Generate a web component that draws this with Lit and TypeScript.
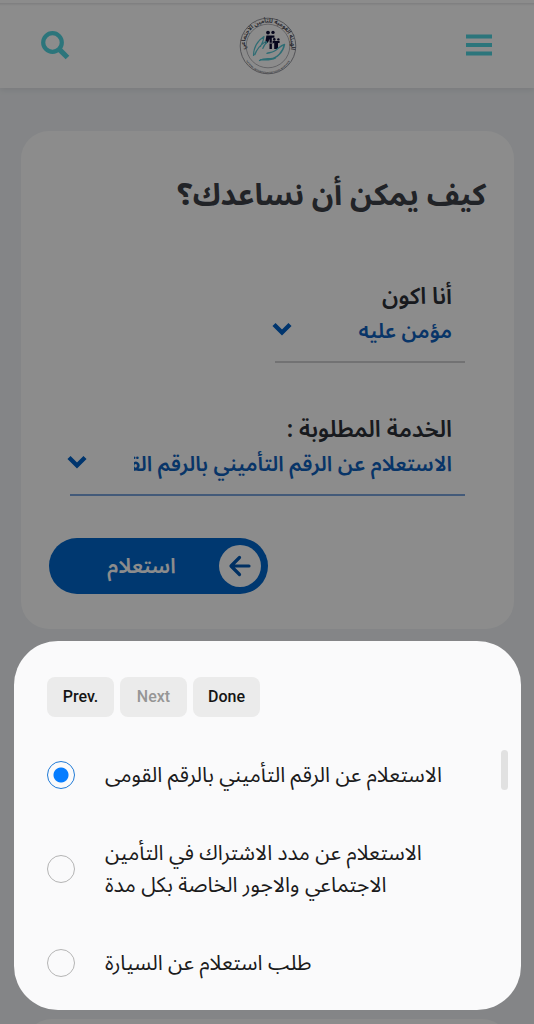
import { LitElement, html, css, svg } from "lit";
import { customElement, state } from "lit/decorators.js";

const SERVICES = [
  "الاستعلام عن الرقم التأميني بالرقم القومى",
  "الاستعلام عن مدد الاشتراك في التأمين الاجتماعي والاجور الخاصة بكل مدة",
  "طلب استعلام عن السيارة",
];

const chevron = svg`<path d="M3 3.5 11 11.5 19 3.5" fill="none" stroke="currentColor" stroke-width="4.4" />`;

@customElement("site-logo")
class SiteLogo extends LitElement {
  static styles = css`
    :host { display: block; }
    svg { display: block; width: 58px; height: 58px; overflow: visible; }
    .top { font: 600 6px "Noto Sans Arabic", "DejaVu Sans", sans-serif; fill: #3a3a48; }
    .low { font: 700 2px "Liberation Sans", sans-serif; fill: #5a5a66; }
  `;
  render() {
    return html`<svg viewBox="0 0 58 58" role="img" aria-label="الهيئة القومية للتأمين الاجتماعي">
      <defs>
        <path id="arc-top" d="M6.200 33A23.200 23.200 0 1 1 51.800 33" />
        <path id="arc-low" d="M3.700 31A25.300 25.300 0 0 0 54.300 31" />
      </defs>
      <circle cx="29" cy="29" r="27.800" fill="none" stroke="#7c7c85" stroke-width=".8" />
      <circle cx="29" cy="29" r="21.800" fill="none" stroke="#96969e" stroke-width=".7" />
      <text class="top" text-anchor="middle" direction="rtl"><textPath href="#arc-top" startOffset="50%">الهيئة القومية للتأمين الاجتماعي</textPath></text>
      <text class="low" text-anchor="middle" direction="ltr"><textPath href="#arc-low" startOffset="50%">NATIONAL ORGANIZATION FOR SOCIAL INSURANCE</textPath></text>
      <g fill="#0b0b33">
        <circle cx="29" cy="15.600" r="1.900" /><circle cx="34" cy="15.400" r="1.700" />
        <path d="M27.400 18.500h8v2.200h-2.600v5h-2.200v-3.600l-1.600 3.400-3 1.400z" />
        <circle cx="35.300" cy="22.400" r="1.300" /><circle cx="39.400" cy="22.400" r="1.200" />
        <path d="M33.600 24h7v2h-1.600v6h-3.800v-6.600l-1.600 1.600zM30.500 26.500h2.400V32h-2.400z" />
      </g>
      <g fill="none" stroke="#57c6d4" stroke-linecap="round" stroke-linejoin="round">
        <path stroke-width="1.200" d="M14.500 38.500c0-7.500 4-14.500 10.500-19-.5 4.500-2 7.500-3.500 10M15.800 37.800c2-6 5-9.500 11-13.300l1 1c-2.300 1.800-3.300 4-4 6" />
        <path stroke-width="1.400" d="M20.500 43.500c4-2.300 7-1.600 11-1.800 6.500-.6 12.500-6.700 14-14.200-4 1-6.500 4.500-10 6.500-2.800 1.500-5 1.600-7.500 2.400M21.500 42.800c5-.2 10 .8 15-2" />
      </g>
    </svg>`;
  }
}

@customElement("app-root")
class AppRoot extends LitElement {
  @state() private selected = 0;

  static styles = css`
    :host {
      display: block;
      position: relative;
      min-height: 100vh;
      font-family: "Noto Sans Arabic", "DejaVu Sans", sans-serif;
      color: #2c3038;
    }
    * { box-sizing: border-box; }
    .page {
      display: flex;
      flex-direction: column;
      height: 100vh;
      overflow: hidden;
      background: #f0f3f6;
    }
    .header {
      display: flex;
      flex: none;
      align-items: center;
      justify-content: space-between;
      height: 88px;
      padding: 3px 42px 0 41px;
      background: linear-gradient(#e6e6e8, #fff) 0 3px / 100% 3px no-repeat #fff;
      box-shadow: 0 2px 6px rgba(0, 0, 0, 0.08);
    }
    .icon-button {
      display: block;
      padding: 0;
      border: 0;
      background: none;
      color: #50d6e1;
    }
    .icon-button svg { display: block; }
    .card {
      flex: none;
      margin: 43px 20px 0 21px;
      padding: 43px 28px 35px;
      border-radius: 28px;
      background: #fff;
    }
    .next-card {
      flex: none;
      height: 120px;
      margin: 390px 24px 0;
      border-radius: 28px;
      background: #fff;
    }
    .title {
      margin: 0 0 62px;
      font-size: 30px;
      line-height: 44px;
      font-weight: 700;
      color: #3c4048;
    }
    .fields {
      display: flex;
      flex-direction: column;
      gap: 50px;
      margin: 0 21px 42px;
    }
    .field label {
      display: block;
      padding-right: 13px;
      font-size: 23px;
      line-height: 34px;
      font-weight: 600;
    }
    .control {
      display: grid;
      align-items: start;
      border-bottom: 2px solid #d0d0d2;
    }
    .control.short { width: 48%; }
    .control.focused { border-color: #7ba4dc; }
    .control select {
      grid-area: 1 / 1;
      width: 100%;
      height: 47px;
      padding: 0 13px 13px 64px;
      border: 0;
      outline: 0;
      appearance: none;
      background: none;
      color: #0f62bd;
      font: 600 21px/34px "Noto Sans Arabic", "DejaVu Sans", sans-serif;
    }
    .control svg {
      grid-area: 1 / 1;
      justify-self: end;
      width: 22px;
      height: 16px;
      margin: 7px 0 0 -4px;
      color: #0062c8;
      pointer-events: none;
    }
    .submit {
      display: flex;
      align-items: center;
      width: 219px;
      height: 56px;
      margin: 0 auto 0 0;
      padding: 7px;
      border: 0;
      border-radius: 28px;
      background: #0066cc;
      color: #fff;
      font: 600 21px/28px "Noto Sans Arabic", "DejaVu Sans", sans-serif;
    }
    .submit svg { flex: none; width: 42px; height: 42px; }
    .submit span { flex: 1; padding-left: 8px; }
    .scrim {
      position: absolute;
      inset: 0;
      background: rgba(0, 0, 0, 0.45);
    }
    .sheet {
      position: absolute;
      left: 14px;
      right: 13px;
      bottom: 14px;
      padding: 36px 33px 0;
      border-radius: 44px;
      background: #fafafb;
      overflow: hidden;
    }
    .actions { display: flex; gap: 6px; margin-bottom: 11px; }
    .actions button {
      width: 67px;
      height: 40px;
      padding: 0;
      border: 0;
      border-radius: 8px;
      background: #ebebeb;
      color: #151515;
      font: 500 16px/24px Roboto, sans-serif;
    }
    .actions button:disabled { color: #969696; }
    .option {
      display: flex;
      align-items: center;
      gap: 30px;
      min-height: 94px;
      padding-right: 24px;
      color: #1b1b1b;
      font-size: 21px;
      line-height: 32px;
    }
    .option input {
      flex: none;
      width: 28px;
      height: 28px;
      margin: 0;
      border: 1px solid #b4b4b4;
      border-radius: 50%;
      appearance: none;
    }
    .option input:checked {
      border-color: #1f7ad6;
      background: radial-gradient(circle, #067dff 7px, #fafafb 8px);
    }
    .option span { flex: 1; text-align: left; }
    .thumb {
      position: absolute;
      top: 109px;
      right: 13px;
      width: 7px;
      height: 40px;
      border-radius: 4px;
      background: #e1e1e1;
    }
  `;

  render() {
    return html`
      <div class="page" dir="rtl">
        <header class="header">
          <button class="icon-button" aria-label="القائمة">
            <svg width="26" height="26" viewBox="0 0 26 26"><path d="M0 3.500h26M0 12h26M0 20.500h26" stroke="currentColor" stroke-width="4" /></svg>
          </button>
          <site-logo></site-logo>
          <button class="icon-button" aria-label="بحث">
            <svg width="28" height="28" viewBox="1.500 2.500 28 28" fill="none" stroke="currentColor" overflow="visible"><circle cx="13" cy="13" r="9.300" stroke-width="4.200" /><path d="M19.800 19.800 28 28" stroke-width="5.200" /></svg>
          </button>
        </header>
        <main class="card">
          <h1 class="title">كيف يمكن أن نساعدك؟</h1>
          <div class="fields">
            <div class="field">
              <label for="who">أنا اكون</label>
              <div class="control short">
                <select id="who"><option>مؤمن عليه</option></select>
                <svg viewBox="0 0 22 16">${chevron}</svg>
              </div>
            </div>
            <div class="field">
              <label for="service">الخدمة المطلوبة :</label>
              <div class="control focused">
                <select id="service" .selectedIndex=${this.selected}>
                  ${SERVICES.map((s) => html`<option>${s}</option>`)}
                </select>
                <svg viewBox="0 0 22 16">${chevron}</svg>
              </div>
            </div>
          </div>
          <button class="submit">
            <svg viewBox="0 0 42 42"><circle cx="21" cy="21" r="21" fill="#fff" /><path d="M30 21H13M20.500 12.500 12 21l8.500 8.500" fill="none" stroke="#0058b4" stroke-width="3.200" stroke-linecap="round" stroke-linejoin="round" /></svg>
            <span>استعلام</span>
          </button>
        </main>
        <div class="next-card"></div>
      </div>
      <div class="scrim"></div>
      <section class="sheet" role="dialog" aria-label="الخدمة المطلوبة">
        <div class="actions">
          <button>Prev.</button>
          <button disabled>Next</button>
          <button>Done</button>
        </div>
        ${SERVICES.map(
          (s, i) => html`<label class="option">
            <input type="radio" name="service" .checked=${this.selected === i} @change=${() => (this.selected = i)} />
            <span dir="rtl">${s}</span>
          </label>`,
        )}
        <div class="thumb"></div>
      </section>
    `;
  }
}
